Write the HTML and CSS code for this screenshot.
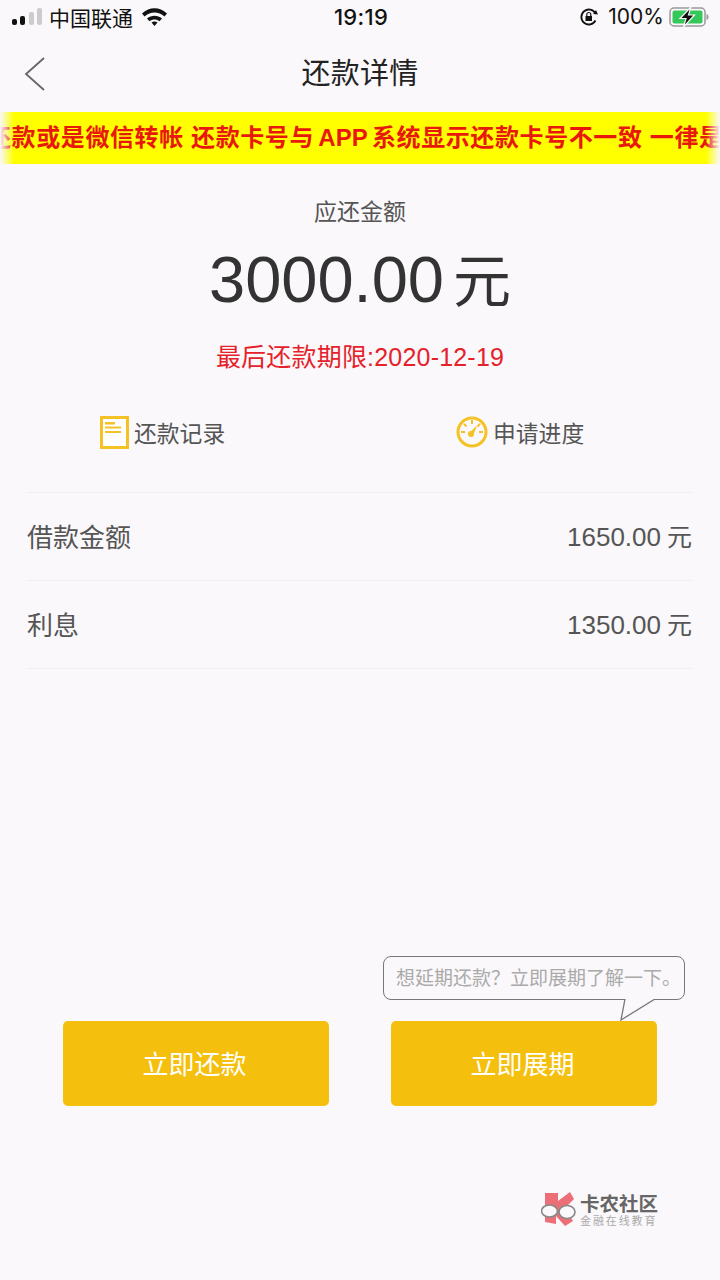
FILE: index.html
```html
<!DOCTYPE html>
<html>
<head>
<title>还款详情</title>
<meta charset="UTF-8">
<meta name="viewport" content="width=device-width, initial-scale=1.0">
<link rel="stylesheet" href="styles.css">
</head>
<body>

<!-- STATUS BAR -->
<div class="status">
	<div class="status-left">
		<svg class="signal" width="31" height="18" viewBox="0 0 31 18">
			<rect x="0" y="11" width="5" height="6" rx="2" fill="#111"/>
			<rect x="8" y="8" width="5" height="9" rx="2" fill="#111"/>
			<rect x="17" y="4" width="5" height="13" rx="2" fill="#ccc"/>
			<rect x="25" y="0" width="5" height="17" rx="2" fill="#ccc"/>
		</svg>
		<span class="carrier">中国联通</span>
		<svg class="wifi" width="27" height="19" viewBox="0 0 27 19">
			<path d="M1 6.500C8.500 -0.500 18.500 -0.500 26 6.500L23.500 9.500C17.500 4.200 9.500 4.200 3.500 9.500Z" fill="#111"/>
			<path d="M6 11.500C10.500 7.700 16.500 7.700 21 11.500L18.500 14.200C15.500 11.800 11.500 11.800 8.500 14.200Z" fill="#111"/>
			<path d="M10.500 15.500C12.300 14 14.700 14 16.500 15.500L13.500 19Z" fill="#111"/>
		</svg>
	</div>
	<div class="status-time">19:19</div>
	<div class="status-right">
		<svg width="20" height="20" viewBox="0 0 20 20">
			<path d="M16.500 6.500A7.500 7.500 0 1 0 16.500 13.500" fill="none" stroke="#111" stroke-width="1.800"/>
			<path d="M14.200 7L19 7.500L17 3Z" fill="#111"/>
			<rect x="6.500" y="9" width="6.500" height="5" fill="#111"/>
			<path d="M7.800 9V7.500a2 2 0 0 1 4 0V9" fill="none" stroke="#111" stroke-width="1.200"/>
		</svg>
		<span class="percent">100%</span>
		<svg width="41" height="20" viewBox="0 0 41 20">
			<rect x="1" y="1" width="35" height="18" rx="4" fill="none" stroke="#999" stroke-width="1.500"/>
			<rect x="3.500" y="3.500" width="30" height="13" rx="2" fill="#34c759"/>
			<path d="M37.500 7v6c1.500 -.5 2 -1.500 2 -3s-.5 -2.500 -2 -3z" fill="#999"/>
			<path d="M22 0L11 11.500H17L14.500 20L25.500 8H19.500Z" fill="#111" stroke="#faf8fa" stroke-width="1.200"/>
		</svg>
	</div>
</div>

<!-- NAV -->
<div class="nav">
	<svg class="back" width="22" height="36" viewBox="0 0 22 36">
		<path d="M20 2L2 18L20 34" fill="none" stroke="#666" stroke-width="1.800"/>
	</svg>
	<div class="nav-title">还款详情</div>
</div>

<!-- MARQUEE -->
<div class="notice">
	<div class="notice-text">还款或是微信转帐 还款卡号与 <span class="notice-en">APP</span> 系统显示还款卡号不一致 一律是</div>
	<div class="fade fade-left"></div>
	<div class="fade fade-right"></div>
</div>

<!-- AMOUNT -->
<div class="summary">
	<div class="summary-label">应还金额</div>
	<div class="summary-amount">3000.00<span class="yuan">元</span></div>
	<div class="summary-date">最后还款期限:2020-12-19</div>
</div>

<!-- LINKS -->
<div class="links">
	<div class="link link-records">
		<svg width="29" height="33" viewBox="0 0 29 33">
			<rect x="1.500" y="1.500" width="26" height="30" fill="#fff" stroke="#f5c226" stroke-width="3"/>
			<rect x="5" y="6" width="10" height="2.500" fill="#f5c226"/>
			<rect x="5" y="10.500" width="16" height="2" fill="#f5c226"/>
			<rect x="5" y="15" width="16" height="2" fill="#f5c226"/>
		</svg>
		<span>还款记录</span>
	</div>
	<div class="link link-progress">
		<svg width="32" height="32" viewBox="0 0 32 32">
			<circle cx="16" cy="16" r="14" fill="none" stroke="#f5c226" stroke-width="3"/>
			<path d="M16 4v4M5 16h4M23 16h4M8 8l2.500 2.500M24 8l-2.500 2.500" stroke="#f5c226" stroke-width="2"/>
			<circle cx="15" cy="18" r="3" fill="#f5c226"/>
			<path d="M13.500 16.500L21 9.500L17 20Z" fill="#f5c226"/>
		</svg>
		<span>申请进度</span>
	</div>
</div>

<!-- DETAILS -->
<div class="rows">
	<div class="row"><span>借款金额</span><span>1650.00<span class="row-unit">元</span></span></div>
	<div class="row"><span>利息</span><span>1350.00<span class="row-unit">元</span></span></div>
</div>

<!-- BUTTONS -->
<div class="actions">
	<div class="btn">立即还款</div>
	<div class="btn">立即展期
		<div class="tip">想延期还款？立即展期了解一下。
			<svg class="tip-tail" width="38" height="24" viewBox="0 0 38 24">
				<path d="M5 0L1 21L35 0" fill="#faf8fa" stroke="#777" stroke-width="1.300"/>
			</svg>
		</div>
	</div>
</div>

<!-- WATERMARK -->
<div class="mark">
	<svg width="38" height="38" viewBox="0 0 38 38">
		<path d="M4 2H17V10L29 1L33 8L24 17L32 30L24 35L15 25V33L4 31Z" fill="#ec6f78"/>
		<ellipse cx="8.500" cy="20" rx="8" ry="6" fill="#faf8fa" stroke="#888" stroke-width="1.600"/>
		<ellipse cx="26" cy="21" rx="8" ry="6.500" fill="#faf8fa" stroke="#888" stroke-width="1.600"/>
	</svg>
	<div>
		<div class="mark-name">卡农社区</div>
		<div class="mark-sub">金融在线教育</div>
	</div>
</div>

</body>
</html>
```

FILE: styles.css
```css
body{
	margin: 0px;
	height: 1280px;
	overflow: hidden;
	background: #faf8fa;
	color: #333;
	font-family: "Liberation Sans", "Noto Sans CJK SC", sans-serif;
}

/* status bar */
.status{
	height: 36px;
	box-sizing: border-box;
	display: flex;
	align-items: center;
	justify-content: space-between;
	padding: 0px 10px 3px 12px;
	color: #111;
	font-size: 21px;
}

.status-left{
	width: 260px;
	display: flex;
	align-items: center;
}

.carrier{
	margin-left: 6px;
	margin-right: 8px;
}

.status-time{
	font-family: Inter, "Liberation Sans", sans-serif;
	font-weight: 500;
	font-size: 22px;
	letter-spacing: 0.300px;
}

.status-right{
	width: 260px;
	display: flex;
	align-items: center;
	justify-content: flex-end;
}

.percent{
	font-family: Inter, "Liberation Sans", sans-serif;
	margin: 0px 5px 0px 9px;
}

/* nav */
.nav{
	height: 76px;
	box-sizing: border-box;
	padding-bottom: 6px;
	position: relative;
	display: flex;
	align-items: center;
	justify-content: center;
}

.back{
	position: absolute;
	left: 24px;
	top: 20px;
}

.nav-title{
	font-size: 29px;
	letter-spacing: 0.300px;
	color: #222;
}

/* marquee */
.notice{
	position: relative;
	height: 52px;
	box-sizing: border-box;
	padding-bottom: 6px;
	background: #ff0;
	overflow: hidden;
	display: flex;
	align-items: center;
}

.notice-text{
	margin-left: -13px;
	white-space: nowrap;
	font-size: 24px;
	font-weight: 700;
	letter-spacing: 0.600px;
	color: #e8190c;
}

.notice-en{
	margin: 0px -3px;
	letter-spacing: 0px;
}

.fade{
	position: absolute;
	top: 0px;
	bottom: 0px;
	width: 14px;
}

.fade-left{
	left: 0px;
	background: linear-gradient(to right, #faf8fa, rgba(250, 248, 250, 0));
}

.fade-right{
	right: 0px;
	background: linear-gradient(to left, #faf8fa, rgba(250, 248, 250, 0));
}

/* amount */
.summary{
	text-align: center;
	padding-top: 31px;
}

.summary-label{
	font-size: 23px;
	line-height: 34px;
	color: #555;
}

.summary-amount{
	font-size: 65px;
	line-height: 90px;
	margin-top: 6px;
	color: #333;
}

.yuan{
	font-size: 58px;
	margin-left: 9px;
}

.summary-date{
	font-size: 25px;
	line-height: 34px;
	margin-top: 13px;
	letter-spacing: 0.200px;
	color: #e5222a;
}

/* links */
.links{
	display: flex;
	height: 62px;
	margin-top: 27px;
}

.link{
	display: flex;
	align-items: center;
	gap: 5px;
	font-size: 22.800px;
	color: #555;
}

.link-records{
	margin-left: 100px;
	width: 356px;
}

/* rows */
.rows{
	margin: 29px 28px 0px 27px;
	border-top: 1px solid #f0eef0;
}

.row{
	height: 88px;
	box-sizing: border-box;
	padding-bottom: 3px;
	display: flex;
	align-items: center;
	justify-content: space-between;
	border-bottom: 1px solid #f0eef0;
	font-size: 26px;
	color: #555;
}

.row-unit{
	font-size: 25px;
	margin-left: 6px;
}

/* buttons */
.actions{
	display: flex;
	gap: 62px;
	margin: 352px 0px 0px 63px;
}

.btn{
	position: relative;
	width: 266px;
	height: 85px;
	box-sizing: border-box;
	padding: 0px 3px 2px 0px;
	border-radius: 5px;
	background: #f5bf0e;
	color: #fff;
	font-size: 26px;
	display: flex;
	align-items: center;
	justify-content: center;
}

.tip{
	position: absolute;
	left: -8px;
	top: -65px;
	width: 302px;
	height: 44px;
	line-height: 44px;
	padding-left: 12px;
	box-sizing: border-box;
	border: 1px solid #777;
	border-radius: 8px;
	background: #faf8fa;
	color: #aaa;
	font-size: 19px;
	white-space: nowrap;
}

.tip-tail{
	position: absolute;
	left: 236px;
	top: 42px;
}

/* watermark */
.mark{
	display: flex;
	align-items: center;
	gap: 1px;
	margin: 85px 0px 0px 541px;
}

.mark-name{
	font-size: 19.500px;
	line-height: 22px;
	font-weight: 700;
	color: #666;
}

.mark-sub{
	font-size: 11px;
	line-height: 13px;
	letter-spacing: 1.900px;
	color: #aaa;
}
```
